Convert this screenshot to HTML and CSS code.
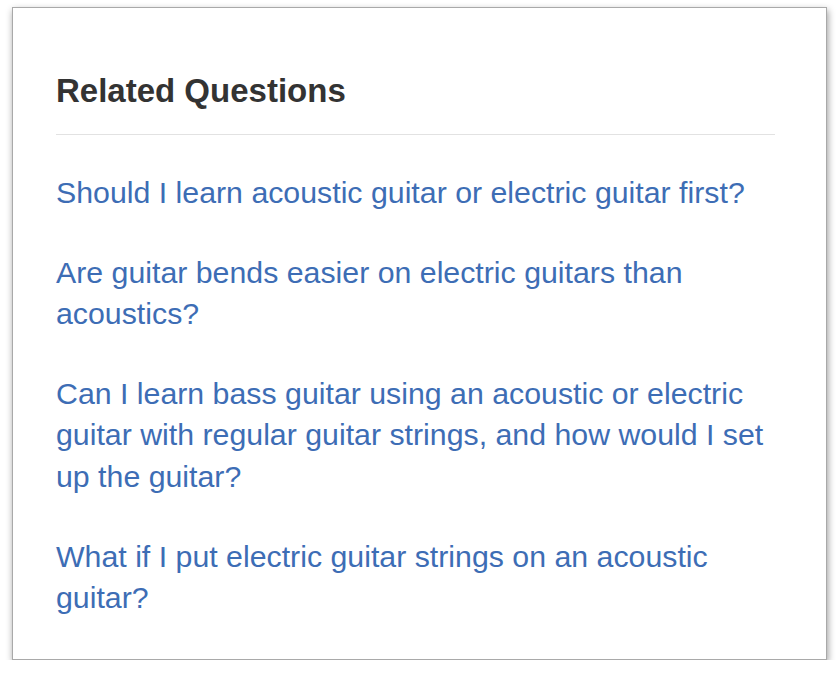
FILE: index.html
```html
<!DOCTYPE html>
<html lang="en">
<head>
  <meta charset="UTF-8" />
  <meta name="viewport" content="width=device-width, initial-scale=1" />
  <title>Related Questions</title>
  <link rel="stylesheet" href="styles.css">
</head>
<body>

  <div class="card">
    <h2 class="card-title">Related Questions</h2>
    <ul class="questions">
      <li><a href="#">Should I learn acoustic guitar or electric guitar first?</a></li>
      <li><a href="#">Are guitar bends easier on electric guitars than acoustics?</a></li>
      <li><a href="#">Can I learn bass guitar using an acoustic or electric guitar with regular guitar strings, and how would I set up the guitar?</a></li>
      <li><a href="#">What if I put electric guitar strings on an acoustic guitar?</a></li>
    </ul>
  </div>

</body>
</html>
```

FILE: styles.css
```css
body {
  margin: 0;
  font-family: "Liberation Sans", Arial, sans-serif;
  background: #fff;
}
.card {
  margin: 7px 0 0 12px;
  width: 719px;
  height: 588px;
  padding: 63px 51px 0 43px;
  background: #fff;
  border: 1px solid #a9a9a9;
  box-shadow: 1px 3px 7px rgba(0,0,0,0.4);
}
.card-title {
  margin: 0;
  padding-bottom: 23px;
  border-bottom: 1px solid #e2e2e2;
  font-size: 33px;
  line-height: 40px;
  font-weight: bold;
  color: #333;
}
.questions {
  list-style: none;
  margin: 37px 0 0;
  padding: 0;
}
.questions li {
  margin-bottom: 38px;
  font-size: 30.3px;
  line-height: 41.6px;
}
.questions a {
  color: #3d6db5;
  text-decoration: none;
}
```
